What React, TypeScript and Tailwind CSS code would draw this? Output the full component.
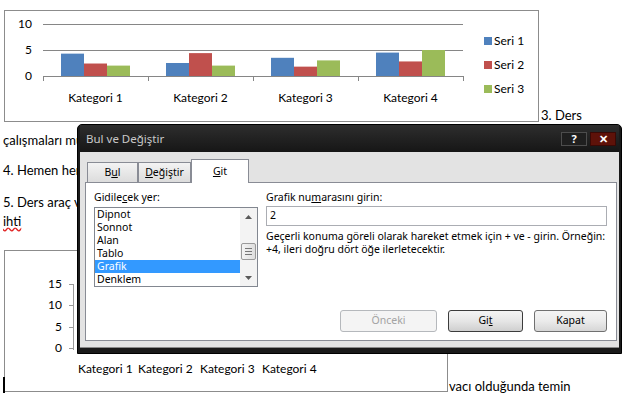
import React from "react";

const SERIES = [
  { name: "Seri 1", color: "#4f81bd", values: [4.3, 2.5, 3.5, 4.5] },
  { name: "Seri 2", color: "#c0504d", values: [2.4, 4.4, 1.8, 2.8] },
  { name: "Seri 3", color: "#9bbb59", values: [2, 2, 3, 5] },
];

const CATS = ["Kategori 1", "Kategori 2", "Kategori 3", "Kategori 4"];

function TopChart() {
  // coordinates are inside the 1px border
  const x0 = 38;
  const step = 105;
  const zeroY = 65;
  const unit = 5.2;
  return (
    <div className="h-[112px] w-[535px] shrink-0 border border-[#8c8c8c] bg-white">
      <svg width="533" height="110" className="block" style={{ fontFamily: "Lato, sans-serif" }}>
        {[13, 39].map((y) => (
          <line key={y} x1={x0} x2={x0 + step * 4} y1={y + 0.5} y2={y + 0.5} stroke="#868686" />
        ))}
        <line x1={x0} x2={x0 + step * 4} y1={zeroY + 0.5} y2={zeroY + 0.5} stroke="#868686" />
        {[0, 1, 2, 3, 4].map((i) => (
          <line
            key={i}
            x1={x0 + step * i + 0.5}
            x2={x0 + step * i + 0.5}
            y1={zeroY}
            y2={zeroY + 5}
            stroke="#868686"
          />
        ))}
        {[
          ["10", 13],
          ["5", 39],
          ["0", 65],
        ].map(([t, y]) => (
          <text key={t} x={27} y={Number(y) + 4} textAnchor="end" fontSize="12" fill="#000">
            {t}
          </text>
        ))}
        {CATS.map((c, ci) => {
          const center = x0 + step * ci + step / 2;
          return (
            <g key={c}>
              {SERIES.map((s, si) => {
                const h = s.values[ci] * unit;
                return (
                  <rect
                    key={s.name}
                    x={center - 34.5 + si * 23}
                    y={zeroY - h}
                    width={23}
                    height={h}
                    fill={s.color}
                  />
                );
              })}
              <text x={center} y={91} textAnchor="middle" fontSize="12" fill="#000">
                {c}
              </text>
            </g>
          );
        })}
        {SERIES.map((s, i) => (
          <g key={s.name}>
            <rect x={479} y={26 + i * 24} width={8} height={8} fill={s.color} />
            <text x={489} y={34 + i * 24} fontSize="12" fill="#000">
              {s.name}
            </text>
          </g>
        ))}
      </svg>
    </div>
  );
}

function BottomChart() {
  return (
    <div className="h-[142px] w-[444px] shrink-0 border border-[#8c8c8c] bg-white">
      <svg width="442" height="140" className="block" style={{ fontFamily: "Lato, sans-serif" }}>
        <line x1={68.5} x2={68.5} y1={33} y2={99} stroke="#9a9a9a" />
        {[
          ["15", 33],
          ["10", 54],
          ["5", 76],
          ["0", 97],
        ].map(([t, y]) => (
          <g key={t}>
            <line x1={64} x2={68} y1={Number(y) + 0.5} y2={Number(y) + 0.5} stroke="#9a9a9a" />
            <text x={57} y={Number(y) + 4} textAnchor="end" fontSize="12" fill="#000">
              {t}
            </text>
          </g>
        ))}
        {[73, 133, 195, 257].map((x, i) => (
          <text key={x} x={x} y={122} fontSize="12" fill="#000">
            {CATS[i]}
          </text>
        ))}
      </svg>
    </div>
  );
}

function TabButton({ children, active }: { children: React.ReactNode; active?: boolean }) {
  if (active) {
    return (
      <div className="relative z-10 -mb-px flex h-[24px] w-[58px] items-center justify-center border border-b-0 border-[#898c95] bg-white">
        {children}
      </div>
    );
  }
  return (
    <div className="flex h-[20px] items-center justify-center border border-b-0 border-[#898c95] bg-gradient-to-b from-[#f3f3f3] to-[#dcdcdc]">
      {children}
    </div>
  );
}

function Btn({
  children,
  width,
  variant,
}: {
  children: React.ReactNode;
  width: string;
  variant: "disabled" | "default" | "normal";
}) {
  const cls =
    variant === "disabled"
      ? "border-[#b5b8bc] bg-[#f4f4f4] text-[#a3a3a3]"
      : variant === "default"
        ? "border-[#3c3c3c] bg-gradient-to-b from-[#f4f4f4] via-[#e6e6e6] to-[#cfcfcf] text-black"
        : "border-[#707070] bg-gradient-to-b from-[#f4f4f4] via-[#ebebeb] to-[#d6d6d6] text-black";
  return (
    <div className={`flex h-[22px] items-center justify-center rounded-[3px] border ${width} ${cls}`}>
      {children}
    </div>
  );
}

function FindDialog() {
  const items = ["Dipnot", "Sonnot", "Alan", "Tablo", "Grafik", "Denklem"];
  return (
    <div
      className="absolute left-[77px] top-[124px] flex h-[230px] w-[545px] flex-col rounded-t-[5px] border border-black bg-[#1a1a1a] px-[2px] pb-[5px] text-[10.5px] text-black"
      style={{ fontFamily: '"Noto Sans", sans-serif' }}
    >
      {/* title bar */}
      <div className="flex h-[27px] shrink-0 items-center justify-between bg-gradient-to-b from-[#2e2e2e] to-[#161616] pl-[6px] pr-[3px]">
        <span className="text-[11.5px] text-[#c9c9c9]">Bul ve Değiştir</span>
        <div className="flex gap-[3px]">
          <div className="flex h-[14px] w-[26px] items-center justify-center border border-[#4d4d4d] bg-[#1f1f1f] text-[11px] font-bold leading-none text-white">
            ?
          </div>
          <div className="flex h-[14px] w-[26px] items-center justify-center border border-[#3b0905] bg-[#5e1209] text-[11px] font-bold leading-none text-white">
            ✕
          </div>
        </div>
      </div>

      {/* body */}
      <div className="flex flex-1 flex-col border-b border-[#8a8a8a] bg-[#e3e3e3] pb-[6px] pl-[5px] pr-[2px] pt-[7px]">
        <div className="flex items-end pl-[2px]">
          <div className="w-[51px]">
            <TabButton>
              <span>
                B<span className="underline">u</span>l
              </span>
            </TabButton>
          </div>
          <div className="w-[53px]">
            <TabButton>
              <span>
                <span className="underline">D</span>eğiştir
              </span>
            </TabButton>
          </div>
          <TabButton active>
            <span>
              <span className="underline">G</span>it
            </span>
          </TabButton>
        </div>

        <div className="flex flex-1 flex-col border border-[#898c95] bg-white px-[8px] pb-[8px] pt-[7px]">
          <div className="flex gap-[8px]">
            <div className="w-[164px]">
              <div className="leading-[14px]">
                Gidile<span className="underline">c</span>ek yer:
              </div>
              <div className="mt-[3px] flex h-[80px] border border-[#828790] bg-white">
                <div className="flex-1">
                  {items.map((it) => (
                    <div
                      key={it}
                      className={
                        it === "Grafik"
                          ? "h-[13px] bg-[#3399ff] pl-[2px] leading-[13px] text-white"
                          : "h-[13px] pl-[2px] leading-[13px]"
                      }
                    >
                      {it}
                    </div>
                  ))}
                </div>
                <div className="flex w-[17px] flex-col items-center bg-[#f3f3f3]">
                  <div className="flex h-[17px] items-center justify-center">
                    <svg width="7" height="4" viewBox="0 0 7 4">
                      <path d="M0 4 L3.5 0 L7 4 Z" fill="#5a5a5a" />
                    </svg>
                  </div>
                  <div className="mt-[18px] flex h-[17px] w-[15px] flex-col items-center justify-center gap-[2px] rounded-[2px] border border-[#9a9a9a] bg-gradient-to-r from-[#f4f4f4] to-[#dedede]">
                    <div className="h-px w-[7px] bg-[#777]" />
                    <div className="h-px w-[7px] bg-[#777]" />
                    <div className="h-px w-[7px] bg-[#777]" />
                  </div>
                  <div className="mt-auto flex h-[17px] items-center justify-center">
                    <svg width="7" height="4" viewBox="0 0 7 4">
                      <path d="M0 0 L7 0 L3.5 4 Z" fill="#5a5a5a" />
                    </svg>
                  </div>
                </div>
              </div>
            </div>

            <div className="flex-1 pr-[1px]">
              <div className="leading-[14px]">
                Grafik nu<span className="underline">m</span>arasını girin:
              </div>
              <div className="mt-[2px] flex h-[20px] items-center border border-[#abadb3] pl-[3px]">2</div>
              <div className="mt-[4px] leading-[12.5px]">
                Geçerli konuma göreli olarak hareket etmek için + ve - girin. Örneğin:
                <br />
                +4, ileri doğru dört öğe ilerletecektir.
              </div>
            </div>
          </div>

          <div className="mt-auto flex justify-end gap-[11px] pr-[1px]">
            <Btn width="w-[97px]" variant="disabled">
              Önceki
            </Btn>
            <Btn width="w-[75px]" variant="default">
              <span>
                Gi<span className="underline">t</span>
              </span>
            </Btn>
            <Btn width="w-[73px]" variant="normal">
              Kapat
            </Btn>
          </div>
        </div>
      </div>
    </div>
  );
}

export default function App() {
  return (
    <div className="relative h-[393px] w-[625px] overflow-hidden bg-white text-black">
      <div
        className="whitespace-nowrap pl-[3px] pt-[10px] text-[13px]"
        style={{ fontFamily: "Lato, sans-serif" }}
      >
        <div className="flex items-end pl-[1px]">
          <TopChart />
          <span className="-mb-[3px] ml-[2px] leading-[20px]">3. Ders</span>
        </div>
        {/* the rest of these lines lies under the dialog */}
        <p className="mt-[8px] leading-[20px]">çalışmaları mu</p>
        <p className="mt-[10px] leading-[20px]">4. Hemen her</p>
        <p className="mt-[13px] leading-[19px]">
          5. Ders araç v
          <br />
          <span className="underline decoration-[#e02020] decoration-wavy">ihti</span>
        </p>
        <div className="mt-[19px] flex items-end pl-[1px]">
          <BottomChart />
          <span className="-mb-[4px] ml-[1px] leading-[20px]">vacı olduğunda temin</span>
        </div>
      </div>

      {/* text cursor */}
      <div className="absolute left-[3px] top-[377px] h-[16px] w-[2px] bg-black" />

      <FindDialog />
    </div>
  );
}
